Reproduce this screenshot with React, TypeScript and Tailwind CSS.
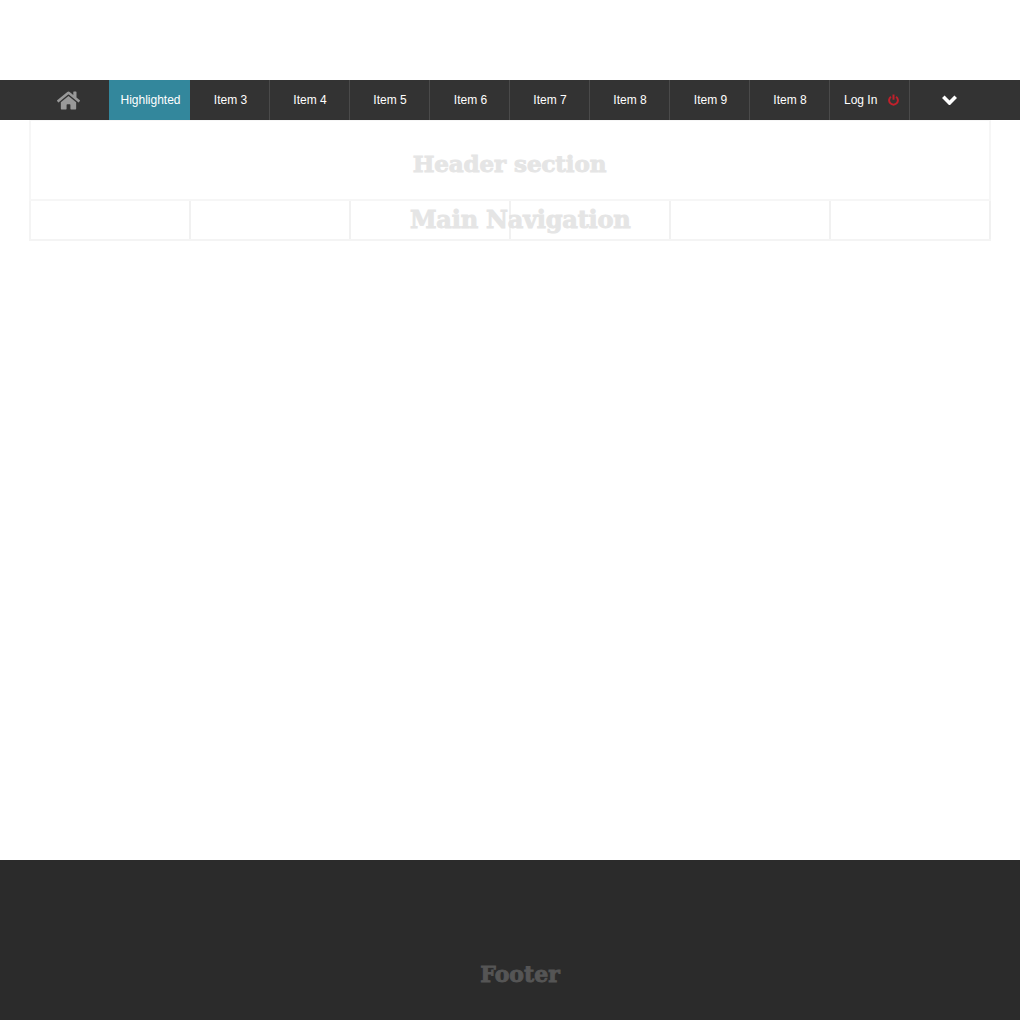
import { FaHome } from "react-icons/fa";

const items = [
  { label: "Item 3", cls: "pl-[2px]" },
  { label: "Item 4", cls: "pl-[1px]" },
  { label: "Item 5", cls: "pl-[1px]" },
  { label: "Item 6", cls: "pl-[2px]" },
  { label: "Item 7", cls: "pl-[1px]" },
  { label: "Item 8", cls: "pl-[1px]" },
  { label: "Item 9", cls: "pl-[2px]" },
  { label: "Item 8", cls: "pl-[1px]" },
];
const slab = "font-['DejaVu_Serif',serif] font-bold leading-none whitespace-nowrap";

export default function App() {
  return (
    <div className="w-[1020px] h-[1020px] flex flex-col bg-white font-['Liberation_Sans',sans-serif] overflow-hidden">
      <div className="h-20 shrink-0" />
      <nav className="h-10 shrink-0 flex bg-[#333333] pl-[30px] text-white text-[12px]">
        <div className="w-[79px] flex items-center justify-center">
          <FaHome className="text-[#999999] text-[23px] ml-[-3px]" />
        </div>
        <div className="w-[81px] bg-[#33879c] flex items-center justify-center pl-[2px]">Highlighted</div>
        {items.map((t, i) => (
          <div key={i} className={`w-20 flex items-center justify-center border-r border-[#4a4a4a] ${t.cls}`}>
            {t.label}
          </div>
        ))}
        <div className="w-20 flex items-center border-r border-[#4a4a4a] pl-[14px]">
          <span>Log In</span>
          <svg width="11" height="12" viewBox="0 0 11 12" className="ml-[11px]" fill="none" stroke="#c1202b" strokeWidth="2">
            <path d="M2.9 2.7a4.4 4.4 0 1 0 5.2 0" />
            <path d="M5.5 0.5v5.2" />
          </svg>
        </div>
        <div className="w-20 flex items-center justify-center">
          <svg width="15" height="10" viewBox="0 0 15 10" className="ml-[-1px]" fill="none" stroke="#ffffff" strokeWidth="3.6">
            <path d="M1.3 1.8 7.5 8 13.7 1.8" />
          </svg>
        </div>
      </nav>
      <main className="h-[740px] shrink-0 relative pl-[29px] pr-[29px]">
        <section className="h-[81px] border-x-2 border-t border-b-2 border-[#f6f6f6] flex items-center justify-center pt-[7px] pr-[1px]">
          <h1 className={`${slab} text-[#e5e5e5] text-[23px] tracking-[-0.1px] [-webkit-text-stroke:0.9px_#e5e5e5]`}>
            Header section
          </h1>
        </section>
        <div className="h-10 grid grid-cols-6 border-b-2 border-l-2 border-[#f4f4f4]">
          {[0, 1, 2, 3, 4, 5].map((i) => (
            <div key={i} className="border-r-2 border-[#f1f1f1]" />
          ))}
        </div>
        <h2 className={`${slab} absolute left-[410px] top-[88px] w-[220px] text-center text-[#e5e5e5] text-[24px] tracking-[-0.2px] [-webkit-text-stroke:0.9px_#e5e5e5]`}>
          Main Navigation
        </h2>
      </main>
      <footer className="flex-1 bg-[#2b2b2b] flex items-end justify-center pb-[35px] pl-5">
        <span className={`${slab} text-[#555555] text-[22px] [-webkit-text-stroke:0.9px_#555555]`}>Footer</span>
      </footer>
    </div>
  );
}
